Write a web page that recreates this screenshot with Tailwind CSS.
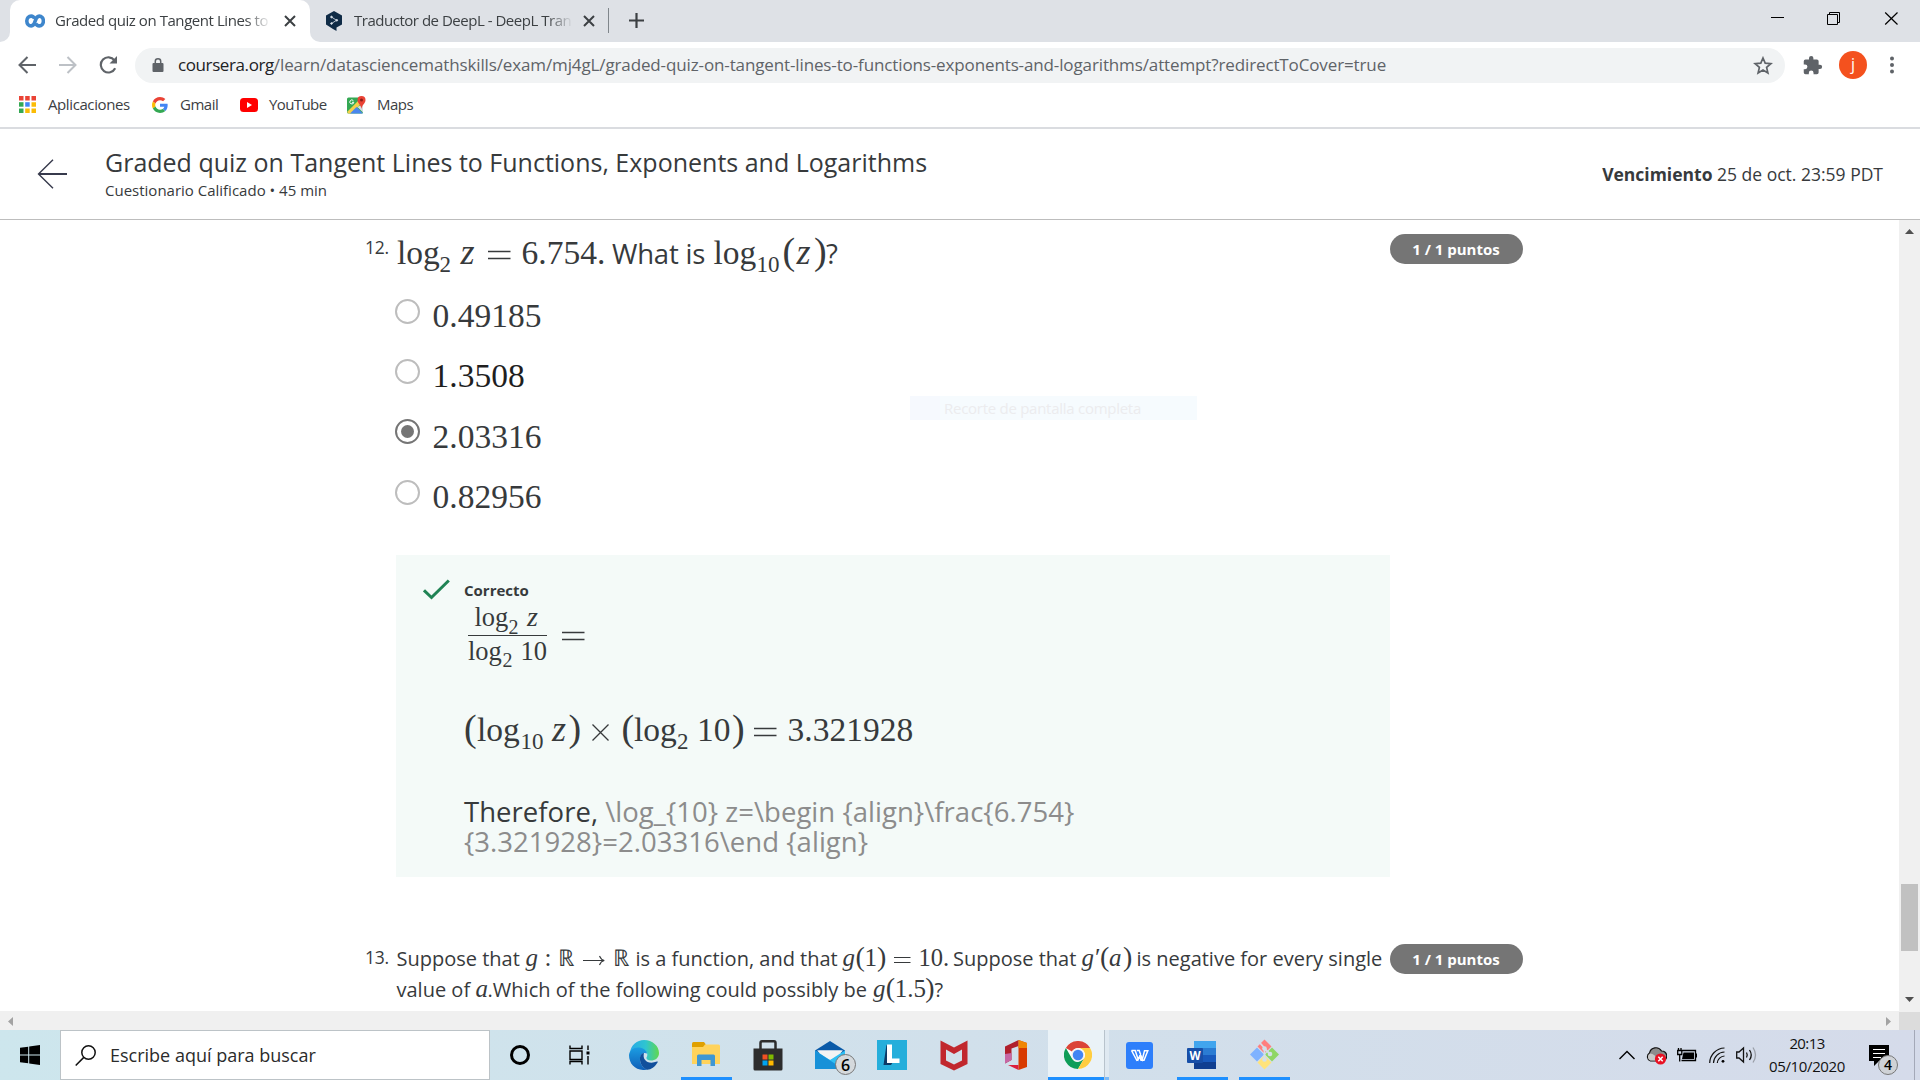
<!DOCTYPE html>
<html lang="es">
<head>
<meta charset="utf-8">
<title>Graded quiz on Tangent Lines to Functions, Exponents and Logarithms</title>
<script src="https://cdn.jsdelivr.net/npm/@tailwindcss/browser@4"></script>
</head>
<body class="flex h-[1080px] w-[1920px] flex-col overflow-hidden bg-white font-['Open_Sans',sans-serif] text-[#373a3c]">

<!-- Tab strip -->
<div class="flex h-[42px] shrink-0 bg-[#dee1e6] text-[15px] text-[#3c4043]">
  <div class="flex w-[10px] items-end bg-white"><div class="h-full w-full rounded-br-[10px] bg-[#dee1e6]"></div></div>
  <div class="bg-[#dee1e6]">
    <div class="flex h-full w-[300px] items-center rounded-t-[10px] bg-white pb-[1px] pl-[15px]">
      <svg class="h-[14px] w-[20px] shrink-0" viewBox="0 0 20 14" fill="none" stroke="#3e86cc" stroke-width="3.600"><path d="M9.600 4.600C8.800 2.900 7.800 2.100 6.200 2.100A4.400 4.900 0 0 0 6.200 11.900C8.800 11.900 9.500 9.500 10.200 7C11 4.200 12 2.100 14.200 2.100A4.200 4.900 0 0 1 14.200 11.900C12.500 11.900 11.400 11 10.700 9.500"/></svg>
      <span class="ml-[10px] w-[216px] overflow-hidden whitespace-nowrap tracking-[-0.44px] [mask-image:linear-gradient(to_right,black_88%,transparent)]">Graded quiz on Tangent Lines to</span>
      <svg class="ml-[13px] h-[12px] w-[12px]" viewBox="0 0 12 12" stroke="#3c4043" stroke-width="2"><path d="M1 1L11 11M11 1L1 11"/></svg>
    </div>
  </div>
  <div class="flex w-[10px] bg-white"><div class="h-full w-full rounded-bl-[10px] bg-[#dee1e6]"></div></div>
  <div class="flex items-center pb-[1px] pl-[5px]">
    <svg class="h-[20px] w-[18px] shrink-0" viewBox="0 0 18 20"><path fill="#0f2b46" d="M9 0L17 4.500V13.500L11.500 16.500V20L8 18L1 13.500V4.500Z"/><g fill="#dfe6ee" stroke="#dfe6ee"><path d="M6.500 6L11.500 9.300L6.500 12.500" fill="none" stroke-width=".8"/><circle cx="6.500" cy="6" r=".8"/><circle cx="11.800" cy="9.300" r=".8"/><circle cx="6.500" cy="12.500" r=".8"/></g></svg>
    <span class="ml-[11px] w-[219px] overflow-hidden whitespace-nowrap tracking-[-0.48px] [mask-image:linear-gradient(to_right,black_88%,transparent)]">Traductor de DeepL - DeepL Tran</span>
    <svg class="ml-[10px] h-[12px] w-[12px]" viewBox="0 0 12 12" stroke="#3c4043" stroke-width="2"><path d="M1 1L11 11M11 1L1 11"/></svg>
    <div class="ml-[13px] h-[25px] w-px bg-[#80868b]"></div>
    <svg class="ml-[20px] h-[15px] w-[15px]" viewBox="0 0 15 15" stroke="#3c4043" stroke-width="2.200"><path d="M7.500 0V15M0 7.500H15"/></svg>
  </div>
  <div class="ml-auto flex pt-[12px] pr-[22px]">
    <svg class="h-[13px] w-[128px]" viewBox="0 0 128 13" fill="none" stroke="#000"><path d="M1 5.500H14" stroke="#000"/><path d="M57.500 2.500H67.500V12.500H57.500ZM59.500 2.500V.500H69.500V10.500H67.500"/><path d="M115.200 .500L127.500 12.500M127.500 .500L115.200 12.500" stroke-width="1.200"/></svg>
  </div>
</div>

<!-- Address bar -->
<div class="flex h-[46px] shrink-0 items-center">
  <svg class="ml-[18px] h-[18px] w-[18px]" viewBox="0 0 18 18" fill="none" stroke="#5f6368" stroke-width="2"><path d="M18 9H2M9.500 1L1.500 9L9.500 17"/></svg>
  <svg class="ml-[23px] h-[18px] w-[18px]" viewBox="0 0 18 18" fill="none" stroke="#bdc1c6" stroke-width="2"><path d="M0 9H16M8.500 1L16.500 9L8.500 17"/></svg>
  <svg class="ml-[22px] h-[18px] w-[20px]" viewBox="0 0 20 18" fill="none" stroke="#5f6368" stroke-width="2.200"><path d="M16.200 12.300A7.600 7.600 0 1 1 15.500 4.300"/><path d="M18 0V7.500H10.500Z" fill="#5f6368" stroke="none"/></svg>
  <div class="ml-[16px] flex h-[35px] w-[1650px] items-center rounded-full bg-[#f1f3f4] pl-[17px] text-[17px]">
    <svg class="h-[14px] w-[12px]" viewBox="0 0 12 14"><path d="M1.500 5H10.500A1 1 0 0 1 11.500 6V13A1 1 0 0 1 10.500 14H1.500A1 1 0 0 1 .500 13V6A1 1 0 0 1 1.500 5Z" fill="#5f6368"/><path d="M3.300 6V3.300A2.700 2.500 0 0 1 8.700 3.300V6" fill="none" stroke="#5f6368" stroke-width="1.500"/></svg>
    <span class="ml-[14px] whitespace-nowrap tracking-[-0.4px] text-[#202124]">coursera.org</span><span class="whitespace-nowrap tracking-[-0.125px] text-[#5f6368]">/learn/datasciencemathskills/exam/mj4gL/graded-quiz-on-tangent-lines-to-functions-exponents-and-logarithms/attempt?redirectToCover=true</span>
    <svg class="mr-[12px] ml-auto h-[19px] w-[20px]" viewBox="0 0 20 19" fill="none" stroke="#5f6368" stroke-width="1.700"><path d="M10 2L12.200 7.200L17.900 7.700L13.600 11.400L14.900 17L10 14L5.100 17L6.400 11.400L2.100 7.700L7.800 7.200Z"/></svg>
  </div>
  <svg class="ml-[17px] h-[21px] w-[21px]" viewBox="0 0 24 24" fill="#5f6368"><path d="M20.500 11H19V7a2 2 0 0 0-2-2h-4V3.500a2.500 2.500 0 0 0-5 0V5H4a2 2 0 0 0-2 2v3.800h1.500a2.700 2.700 0 0 1 0 5.400H2V20a2 2 0 0 0 2 2h3.800v-1.500a2.700 2.700 0 0 1 5.400 0V22H17a2 2 0 0 0 2-2v-4h1.500a2.500 2.500 0 0 0 0-5z"/></svg>
  <div class="ml-[16px] flex h-[28px] w-[28px] items-center justify-center rounded-full bg-[#f4511e] pb-[2px] text-[16px] text-white">j</div>
  <svg class="ml-[22px] h-[18px] w-[6px]" viewBox="0 0 6 18" fill="#5f6368"><circle cx="3" cy="2.500" r="2"/><circle cx="3" cy="9" r="2"/><circle cx="3" cy="15.500" r="2"/></svg>
</div>

<!-- Bookmarks -->
<div class="flex h-[41px] shrink-0 items-center border-b-2 border-[#dadce0] pb-[6px] text-[15px] text-[#3c4043]">
  <svg class="ml-[19px] h-[17px] w-[17px]" viewBox="0 0 17 17"><path fill="#ea4335" d="M0 0h4.500v4.500H0zM6.200 0h4.500v4.500H6.200zM12.500 0H17v4.500h-4.500z"/><path fill="#34a853" d="M0 6.200h4.500v4.500H0z"/><path fill="#4285f4" d="M6.200 6.200h4.500v4.500H6.200z"/><path fill="#fbbc05" d="M12.500 6.200H17v4.500h-4.500zM6.200 12.500h4.500V17H6.200zM12.500 12.500H17V17h-4.500z"/><path fill="#34a853" d="M0 12.500h4.500V17H0z"/></svg>
  <span class="ml-[12px] w-[104px] tracking-[-0.4px]">Aplicaciones</span>
  <svg class="h-[16px] w-[16px]" viewBox="0 0 48 48"><path fill="#EA4335" d="M24 9.500c3.540 0 6.710 1.220 9.210 3.600l6.850-6.850C35.900 2.380 30.470 0 24 0 14.620 0 6.510 5.380 2.560 13.220l7.980 6.190C12.430 13.720 17.740 9.500 24 9.500z"/><path fill="#4285F4" d="M46.980 24.550c0-1.570-.15-3.090-.38-4.550H24v9.020h12.940c-.58 2.960-2.260 5.480-4.780 7.180l7.730 6c4.510-4.180 7.090-10.360 7.090-17.650z"/><path fill="#FBBC05" d="M10.530 28.590c-.48-1.450-.76-2.990-.76-4.590s.27-3.140.76-4.590l-7.980-6.190C.92 16.460 0 20.120 0 24c0 3.880.92 7.540 2.560 10.780l7.970-6.190z"/><path fill="#34A853" d="M24 48c6.480 0 11.930-2.130 15.890-5.810l-7.730-6c-2.150 1.450-4.920 2.300-8.160 2.300-6.260 0-11.570-4.220-13.470-9.910l-7.980 6.190C6.510 42.620 14.620 48 24 48z"/></svg>
  <span class="ml-[12px] w-[60px] tracking-[-0.5px]">Gmail</span>
  <svg class="h-[14px] w-[18px]" viewBox="0 0 18 14"><rect width="18" height="14" rx="3.500" fill="#f00"/><path d="M7 4L12 7L7 10Z" fill="#fff"/></svg>
  <span class="ml-[11px] w-[78px] tracking-[-0.6px]">YouTube</span>
  <svg class="h-[18px] w-[19px]" viewBox="0 0 19 18"><rect x="0" y="1.500" width="16" height="16" rx="1.500" fill="#34a853"/><path d="M0 16L13 3L16 6L4 17.500H1.500Z" fill="#f4d04a"/><path d="M3 17.500L9.500 11L16 17.500Z" fill="#4a86ee"/><path d="M16 8L10.500 11L16 16.500Z" fill="#d9dde2"/><path d="M14.500 0A4 4 0 0 1 18.500 4C18.500 7.500 15 8.500 14.500 13C14 8.500 10.500 7.500 10.500 4A4 4 0 0 1 14.500 0Z" fill="#ea4335"/><circle cx="14.500" cy="4" r="1.500" fill="#8c1d18"/><path d="M6.400 4.700A2 2 0 1 0 6.800 6.300H5" fill="none" stroke="#fff" stroke-width="1"/></svg>
  <span class="ml-[11px] tracking-[-0.5px]">Maps</span>
</div>

<!-- Quiz header -->
<div class="flex h-[91px] shrink-0 border-b border-[#bdbdbd]">
  <svg class="ml-[37px] mt-[30px] h-[30px] w-[31px]" viewBox="0 0 31 30" fill="none" stroke="#373a4c" stroke-width="1.400"><path d="M30 15H2" stroke-width="2"/><path d="M16 .700L1.500 15L16 29.300"/></svg>
  <div class="ml-[37px] flex flex-col pt-[16px]">
    <h1 class="text-[25px] leading-[34px] whitespace-nowrap">Graded quiz on Tangent Lines to Functions, Exponents and Logarithms</h1>
    <p class="text-[15px] leading-[22px]">Cuestionario Calificado • 45 min</p>
  </div>
  <p class="mr-[37px] ml-auto pt-[31px] text-[17.5px] leading-[28px]"><b>Vencimiento</b> 25 de oct. 23:59 PDT</p>
</div>

<!-- Quiz body with scroll bars -->
<div class="relative flex h-[810px] shrink-0 flex-col overflow-hidden">
  <div class="flex h-[791px]">
    <main class="w-[1899px] pl-[365px]">

      <section class="flex h-[657px] leading-none">
        <span class="mt-[19px] w-[31px] text-[17.5px] tracking-[-0.3px]">12.</span>
        <div class="w-[994px] pt-[12px]">
          <div class="flex h-[40px] items-baseline pl-[1px] font-['Liberation_Serif',serif] text-[33.5px]">
            <span class="w-[42.5px]">log</span>
            <span class="w-[21px] translate-y-[8px] text-[23px]">2</span>
            <i class="w-[27px] text-[36px]">z</i>
            <svg class="h-[14px] w-[34px]" stroke="#373a3c" stroke-width="1.300"><path d="M0 1.500H22.500M0 8.500H22.500"/></svg>
            <span class="w-[90.500px]">6.754.</span>
            <span class="w-[101.500px] font-['Open_Sans',sans-serif] text-[27.500px] tracking-[-0.2px]">What is</span>
            <span class="w-[43px]">log</span>
            <span class="w-[26px] translate-y-[8px] text-[23px]">10</span>
            <span class="w-[14px] text-[38px]">(</span>
            <i class="w-[17.500px] text-[36px]">z</i>
            <span class="w-[12px] text-[38px]">)</span>
            <span class="font-['Open_Sans',sans-serif] text-[27.500px]">?</span>
          </div>
          <ul class="mt-[14px] flex flex-col pl-[1px] font-['Liberation_Serif',serif] text-[33.500px] leading-[60px]">
            <li class="flex h-[60.400px]"><span class="mt-[12.500px] mr-[12.500px] ml-[-2px] h-[25px] w-[25px] rounded-full border-2 border-[#bdbdbd]"></span>0.49185</li>
            <li class="flex h-[60.400px]"><span class="mt-[12.500px] mr-[12.500px] ml-[-2px] h-[25px] w-[25px] rounded-full border-2 border-[#bdbdbd]"></span><span class="text-[#1f1f1f]">1.3508</span></li>
            <li class="flex h-[60.400px]"><span class="mt-[12.500px] mr-[12.500px] ml-[-2px] flex h-[25px] w-[25px] items-center justify-center rounded-full border-2 border-[#757575]"><span class="h-[13px] w-[13px] rounded-full bg-[#757575]"></span></span>2.03316</li>
            <li class="flex h-[60.400px]"><span class="mt-[12.500px] mr-[12.500px] ml-[-2px] h-[25px] w-[25px] rounded-full border-2 border-[#bdbdbd]"></span>0.82956</li>
          </ul>
          <div class="mt-[27.400px] flex h-[322px] bg-[#f4faf8] pt-[25px] pl-[27px]">
            <svg class="-mt-px h-[21px] w-[27px]" viewBox="0 0 27 21" fill="none" stroke="#1f8354" stroke-width="3"><path d="M1 11.300L8.500 18.500L25.800 1.500"/></svg>
            <div class="ml-[14px] w-[640px]">
              <p class="text-[15px] leading-[20px] font-bold">Correcto</p>
              <div class="mt-[3px] ml-[4px] flex h-[66px] font-['Liberation_Serif',serif] text-[26.500px]">
                <div class="w-[93.500px]">
                  <div class="flex h-[32px] w-[79px] items-baseline pl-[6.500px]">
                    <span class="w-[34px]">log</span><span class="w-[18.500px] translate-y-[7.500px] text-[20px]">2</span><i class="text-[28px]">z</i>
                  </div>
                  <div class="flex h-[34px] w-[79px] items-baseline border-t border-[#373a3c] pt-[2px]">
                    <span class="w-[34.500px]">log</span><span class="w-[18px] translate-y-[7px] text-[20px]">2</span><span>10</span>
                  </div>
                </div>
                <svg class="mt-[28px] h-[14px] w-[24px]" stroke="#373a3c" stroke-width="1.300"><path d="M0 1.500H22.500M0 8.500H22.500"/></svg>
              </div>
              <div class="mt-[40px] flex h-[40px] items-baseline font-['Liberation_Serif',serif] text-[33.500px]">
                <span class="w-[13px] text-[38px]">(</span>
                <span class="w-[43.500px]">log</span>
                <span class="w-[31.500px] translate-y-[8px] text-[23px]">10</span>
                <i class="w-[16.500px] text-[36px]">z</i>
                <span class="w-[23.500px] text-[38px]">)</span>
                <svg class="h-[17px] w-[29.500px]" stroke="#373a3c" stroke-width="1.300"><path d="M.500 .500L16.500 16.500M16.500 .500L.500 16.500"/></svg>
                <span class="w-[12.500px] text-[38px]">(</span>
                <span class="w-[43px]">log</span>
                <span class="w-[20px] translate-y-[8px] text-[23px]">2</span>
                <span class="w-[35px]">10</span>
                <span class="w-[21.500px] text-[38px]">)</span>
                <svg class="h-[14px] w-[34px]" stroke="#373a3c" stroke-width="1.300"><path d="M0 1.500H22.500M0 8.500H22.500"/></svg>
                <span>3.321928</span>
              </div>
              <p class="mt-[48px] text-[27.500px] leading-[30px] tracking-[0.030px] whitespace-nowrap">Therefore, <span class="text-[#8c8c8c]">\log_{10} z=\begin {align}\frac{6.754}<br>{3.321928}=2.03316\end {align}</span></p>
            </div>
          </div>
        </div>
        <div class="mt-[14px] h-[30px] w-[133px] rounded-full bg-[#757575] pr-px text-center text-[15px] leading-[30px] font-bold text-white">1 / 1 puntos</div>
      </section>

      <section class="mt-[66px] flex h-[68px] leading-none">
        <span class="mt-[5.500px] w-[31.500px] text-[17.500px] tracking-[-0.3px]">13.</span>
        <div class="w-[993.500px] text-[20px] whitespace-nowrap">
          <div class="flex h-[31px] items-baseline">
            <span class="w-[129px]">Suppose that</span>
            <i class="w-[19px] font-['Liberation_Serif',serif] text-[25px]">g</i>
            <span class="w-[13px] font-['Liberation_Serif',serif] text-[25px]">:</span>
            <span class="w-[25px] font-['DejaVu_Sans',sans-serif] text-[23px] font-light">ℝ</span>
            <svg class="h-[12px] w-[30px]" fill="none" stroke="#373a3c" stroke-width="1.100"><path d="M0 6.500H21M16.500 2C17.500 4.500 19 6 21.300 6.500C19 7 17.500 8.500 16.500 11"/></svg>
            <span class="w-[23px] font-['DejaVu_Sans',sans-serif] text-[23px] font-light">ℝ</span>
            <span class="w-[207px]">is a function, and that</span>
            <span class="flex w-[51.500px] items-baseline font-['Liberation_Serif',serif] text-[25px]"><i class="w-[13px]">g</i><span class="w-[9px] text-[28px]">(</span><span class="w-[12.500px]">1</span><span class="text-[28px]">)</span></span>
            <svg class="h-[10px] w-[24.500px]" stroke="#373a3c" stroke-width="1.200"><path d="M0 1.500H16.500M0 6.500H16.500"/></svg>
            <span class="w-[34.500px] font-['Liberation_Serif',serif] text-[24.500px]">10.</span>
            <span class="w-[128.500px]">Suppose that</span>
            <span class="flex w-[55px] items-baseline font-['Liberation_Serif',serif] text-[25px]"><i class="w-[12px]">g</i><i class="w-[6.500px]">′</i><span class="w-[9px] text-[28px]">(</span><i class="w-[14px]">a</i><span class="text-[28px]">)</span></span>
            <span>is negative for every single</span>
          </div>
          <div class="flex h-[31px] items-baseline">
            <span class="w-[79px]">value of</span>
            <i class="w-[12px] font-['Liberation_Serif',serif] text-[25px]">a</i>
            <span class="w-[385.500px] tracking-[0.03px]">.Which of the following could possibly be</span>
            <span class="flex w-[61.500px] items-baseline font-['Liberation_Serif',serif] text-[25px]"><i class="w-[13px]">g</i><span class="w-[9px] text-[28px]">(</span><span class="w-[30.500px]">1.5</span><span class="text-[28px]">)</span></span>
            <span>?</span>
          </div>
        </div>
        <div class="mt-px h-[30px] w-[133px] rounded-full bg-[#757575] pr-px text-center text-[15px] leading-[30px] font-bold text-white">1 / 1 puntos</div>
      </section>
    </main>
    <div class="flex w-[21px] flex-col items-center bg-[#f0f0f0]">
      <svg class="mt-[9px] h-[5px] w-[9px]" viewBox="0 0 9 5"><path d="M0 5L4.500 0L9 5Z" fill="#505050"/></svg>
      <div class="mt-[650px] h-[67px] w-[17px] bg-[#c1c1c1]"></div>
      <svg class="mt-[46px] h-[5px] w-[9px]" viewBox="0 0 9 5"><path d="M0 0L4.500 5L9 0Z" fill="#505050"/></svg>
    </div>
  </div>
  <div class="flex h-[19px] items-center bg-[#f0f0f0] pt-px">
    <svg class="ml-[8px] h-[9px] w-[5px]" viewBox="0 0 5 9"><path d="M5 0L0 4.500L5 9Z" fill="#a3a3a3"/></svg>
    <svg class="mr-[8px] ml-auto h-[9px] w-[5px]" viewBox="0 0 5 9"><path d="M0 0L5 4.500L0 9Z" fill="#a3a3a3"/></svg>
    <div class="h-full w-[21px] bg-[#dcdcdc]"></div>
  </div>
  <!-- Fading tooltip of the snipping tool -->
  <div class="absolute top-[176px] left-[910px] flex h-[24px] w-[287px] items-center bg-[#f6fbfe] text-[15px] text-[#ececee]"><div class="mr-[4px] h-full w-[30px] bg-[#f6f9fe]"></div><span class="tracking-[-0.27px]">Recorte de pantalla completa</span></div>
</div>

<!-- Windows taskbar -->
<div class="flex h-[50px] shrink-0 bg-linear-to-r from-[#cde6ed] via-[#d1e0eb] to-[#d5dbea]">
  <div class="flex w-[60px] items-center justify-center">
    <svg class="h-[20px] w-[20px]" viewBox="0 0 20 20"><path d="M0 2.800L8.200 1.700V9.500H0ZM9.200 1.500L20 0V9.500H9.200ZM0 10.500H8.200V18.300L0 17.200ZM9.200 10.500H20V20L9.200 18.500Z"/></svg>
  </div>
  <div class="flex w-[430px] items-center border border-[#bcc3c7] bg-white pl-[14px] text-[18px] text-[#2b2b2b]">
    <svg class="h-[21px] w-[22px]" viewBox="0 0 22 21" fill="none" stroke="#111" stroke-width="1.500"><circle cx="13.500" cy="7.500" r="6.700"/><path d="M8.800 12.400L.700 20.500"/></svg>
    <span class="ml-[13px]">Escribe aquí para buscar</span>
  </div>
  <div class="flex w-[60px] items-center justify-center"><div class="h-[20px] w-[20px] rounded-full border-[3px] border-black"></div></div>
  <div class="flex w-[63px] items-center pl-[19px]">
    <svg class="h-[20px] w-[22px]" viewBox="0 0 22 20" fill="none" stroke="#000" stroke-width="1.400"><path d="M1 .500V3.500H13V.500M1 6H13V14.500H1ZM1 19.500V16.500H13V19.500M19 .500V5M19 11V19.500"/><path d="M17.500 6.500H20.500V9.500H17.500Z" fill="#000" stroke="none"/></svg>
  </div>

  <div class="flex w-[62px] items-center justify-center">
    <svg class="h-[30px] w-[30px]" viewBox="0 0 30 30"><defs><linearGradient id="e1" x1="0" x2="1"><stop offset="0" stop-color="#27a9e8"/><stop offset=".55" stop-color="#2fc5d0"/><stop offset="1" stop-color="#62d84e"/></linearGradient><linearGradient id="e2" x1="0" y1="0" x2="0" y2="1"><stop offset="0" stop-color="#1b9de2"/><stop offset="1" stop-color="#0f5fb8"/></linearGradient></defs><path d="M.800 13C2 5 8 0 15 0C23.500 0 30 6 30 13C30 18 26 20.500 22 20.500C18.500 20.500 17 19 17.500 17.500C20 14 17 9.500 12 9C7 8.500 3 10 .800 13Z" fill="url(#e1)"/><path d="M0 15C.500 10 5 7 10 7.500C15 8 18 11 18 13.500C14 11.500 10.500 15 11 20C11.500 25 15 29 19 29.500C8 32 0 25 0 15Z" fill="url(#e2)"/><path d="M11 20C10.500 16 12.500 13 15 13C13 20 19 25 28 21.500C28.800 21.200 29 21.800 28.500 22.500C26 27 22 29.500 18.500 29.800C14 28.500 11.500 24.500 11 20Z" fill="#114f9c"/></svg>
  </div>
  <div class="flex w-[62px] flex-col items-center justify-end">
    <svg class="mb-[11px] h-[24px] w-[28px]" viewBox="0 0 28 24"><path d="M0 1.500Q0 0 1.500 0H12L13.500 2V5H0Z" fill="#e0a000"/><path d="M0 5H11L13 2.500H26.500Q28 2.500 28 4V22H0Z" fill="#ffd35c"/><path d="M5 24V14Q5 12.500 6.500 12.500H21.500Q23 12.500 23 14V24H18.500V18H9.500V24Z" fill="#3f97d3"/></svg>
    <div class="h-[3px] w-[51px] bg-[#1e90ff]"></div>
  </div>
  <div class="flex w-[62px] items-center justify-center">
    <svg class="h-[31px] w-[30px]" viewBox="0 0 30 31"><path d="M7.500 9V3Q7.500 1.300 9 1.300H21Q22.500 1.300 22.500 3V9" fill="none" stroke="#2d2d2d" stroke-width="2.500"/><path d="M.500 8.500H29.500V29Q29.500 30.500 28 30.500H2Q.500 30.500 .500 29Z" fill="#2d2d2d"/><path fill="#f25022" d="M9.500 14.500h5v5h-5z"/><path fill="#7fba00" d="M15.500 14.500h5v5h-5z"/><path fill="#00a4ef" d="M9.500 20.500h5v5h-5z"/><path fill="#ffb900" d="M15.500 20.500h5v5h-5z"/></svg>
  </div>
  <div class="relative flex w-[62px] items-center justify-center">
    <svg class="h-[28px] w-[30px]" viewBox="0 0 30 28"><path d="M0 9.500L15 0L30 9.500V12H0Z" fill="#0a5aa8"/><path d="M2 9.500H28L20 18H10Z" fill="#f3f3f3"/><path d="M0 9.500L15 19L30 9.500V28H0Z" fill="#2fc0f5"/><path d="M0 9.500L28 28H0Z" fill="#1791d8"/><path d="M3 9.500H27L15.500 18.500Z" fill="#f3f3f3"/></svg>
    <div class="absolute top-[24px] left-[36px] flex h-[21px] w-[21px] items-center justify-center rounded-full border border-[#777] bg-[#d5d9dc] text-[16px] leading-none font-semibold text-black">6</div>
  </div>
  <div class="flex w-[62px] items-center justify-center">
    <svg class="h-[30px] w-[30px]" viewBox="0 0 30 30"><path fill="#25aedb" d="M0 0H30V30H0Z"/><path d="M9.500 4.500L6.500 25H14L16 22Z" fill="#0c3a66"/><path d="M10 4.500H15V18.500H22.500V23H10Z" fill="#fff"/></svg>
  </div>
  <div class="flex w-[62px] items-center justify-center">
    <svg class="h-[31px] w-[28px]" viewBox="0 0 28 31"><path d="M.500 .500L14 7.500L27.500 .500V24L14 30.500L.500 24Z" fill="#c1272d"/><path d="M6 9.500L14 14L22 9.500V20.500L14 24.500L6 20.500Z" fill="#d2e1ea"/></svg>
  </div>
  <div class="flex w-[62px] items-center justify-center">
    <svg class="h-[30px] w-[24px]" viewBox="0 0 24 30"><path d="M14.500 0L23 3V27L14.500 30Z" fill="#d83b01"/><path d="M1 6.500L14.500 0V6L7.500 8.500V20L1 23.500Z" fill="#b0202c"/><path d="M1 14L7.500 13V20L1 23.500Z" fill="#c667a4"/><path d="M4 25H14.500V30Z" fill="#dc1f3c"/><path d="M14.500 0L23 3V8H14.500Z" fill="#f08705"/></svg>
  </div>
  <div class="flex w-[62px]">
    <div class="ml-[1px] flex w-[56px] flex-col items-center justify-end bg-[#eaf2f7]">
      <svg class="mb-[8px] ml-[3px] h-[28px] w-[28px]" viewBox="0 0 48 48"><circle cx="24" cy="24" r="24" fill="#fff"/><path d="M3.200 12A24 24 0 0 1 44.800 12H24A12 12 0 0 0 13.600 18Z" fill="#db4437"/><path d="M3.200 12L13.600 30A12 12 0 0 0 24 36L34.400 30L24 48A24 24 0 0 1 3.200 12Z" fill="#0f9d58"/><path d="M44.800 12A24 24 0 0 1 24 48L34.400 30A12 12 0 0 0 24 12Z" fill="#ffcd40"/><circle cx="24" cy="24" r="11.500" fill="#f1f1f1"/><circle cx="24" cy="24" r="9" fill="#4285f4"/></svg>
      <div class="h-[3px] w-full bg-[#1e90ff]"></div>
    </div>
    <div class="flex w-[5px] items-end border-l border-[#b8c3cc] bg-[#dfe9f1]"><div class="h-[3px] w-full bg-[#7abaf8]"></div></div>
  </div>
  <div class="flex w-[62px] items-center justify-center pr-px">
    <svg class="h-[27px] w-[27px]" viewBox="0 0 27 27" fill="none"><rect width="27" height="27" rx="3" fill="#2e7ffb"/><path d="M5.500 8.500H9.200L12.200 17.500L14.800 11.500M10.800 8.500H13.200L16.300 17.500L18.500 8.800H21.800L18 18.300H15L13.500 14M5.500 8.500L10.800 18.300L12.500 17.500" stroke="#fff" stroke-width="1.500"/></svg>
  </div>
  <div class="flex w-[62px] flex-col items-center justify-end">
    <svg class="mb-[8px] h-[28px] w-[30px]" viewBox="0 0 30 28"><path fill="#41a5ee" d="M7 0H29V7H7Z"/><path fill="#2b7cd3" d="M7 7H29V14H7Z"/><path fill="#185abd" d="M7 14H29V21H7Z"/><path fill="#103f91" d="M7 21H29V28H7Z"/><rect y="7" width="16" height="15" rx="1" fill="#174fa8"/><text x="8" y="19" font-size="11.500" font-weight="700" fill="#fff" text-anchor="middle">W</text></svg>
    <div class="h-[3px] w-[51px] bg-[#1e90ff]"></div>
  </div>
  <div class="flex w-[62px] flex-col items-center justify-end">
    <svg class="mb-[7px] h-[31px] w-[31px]" viewBox="0 0 31 31"><path d="M15.500 .500L22.500 7.500L15.500 14.500L8.500 7.500Z" fill="#ff7f7f"/><path d="M8 8.500L15 15.500L8 22.500L1 15.500Z" fill="#7fb2ff"/><path d="M23 8.500L30 15.500L23 22.500L16 15.500Z" fill="#8fd665"/><path d="M15.500 16.500L22.500 23.500L15.500 30.500L8.500 23.500Z" fill="#ffe37a"/><path d="M11 4L15.500 9V22M15.500 9.500L21 15" fill="none" stroke="#d2e0ea" stroke-width="1.800"/><g fill="#d2e0ea"><circle cx="15.500" cy="9.500" r="2.300"/><circle cx="15.500" cy="20.500" r="2.300"/><circle cx="21" cy="15" r="2.300"/></g></svg>
    <div class="h-[3px] w-[51px] bg-[#1e90ff]"></div>
  </div>

  <!-- Tray -->
  <div class="ml-auto flex items-center">
    <svg class="h-[10px] w-[16px]" viewBox="0 0 16 10" fill="none" stroke="#000" stroke-width="1.400"><path d="M.500 9L8 1.500L15.500 9"/></svg>
    <svg class="ml-[11px] h-[19px] w-[21px]" viewBox="0 0 21 19"><path d="M4.500 15A4.500 4.500 0 0 1 3.500 7A6.500 6.500 0 0 1 15.500 5A5 5 0 0 1 16 15Z" fill="#8c8c8c" stroke="#111" stroke-width="1.200"/><path d="M4 14.500A4 4 0 0 1 4 7.500Q9 7.500 12 14.500Z" fill="#c8c8c8"/><circle cx="14.500" cy="13" r="5.600" fill="#e81123"/><path d="M12.300 10.800L16.700 15.200M16.700 10.800L12.300 15.200" stroke="#fff" stroke-width="1.500"/></svg>
    <svg class="ml-[10px] h-[14px] w-[20px]" viewBox="0 0 20 14" fill="none" stroke="#000" stroke-width="1.300"><path d="M4 2.500H18.500V12.500H4.500M1.500 0V2M4 0V2M.700 2.500H4.800V6.500H.700ZM2.700 6.500V13.500M19.500 5.500V9.500"/><path d="M6.500 4.500H17V11H5Z" fill="#000" stroke="none"/></svg>
    <svg class="ml-[12px] h-[16px] w-[16px]" viewBox="0 0 16 16" fill="none" stroke="#111" stroke-width="1.200"><path d="M.700 16A15.300 15.300 0 0 1 15.500 1M4.500 16A11.300 11.300 0 0 1 15.500 5M8.300 16A7.500 7.500 0 0 1 15.500 9"/><circle cx="14" cy="14.300" r="1.400" fill="#000" stroke="none"/></svg>
    <svg class="ml-[11px] h-[18px] w-[21px]" viewBox="0 0 21 18" fill="none" stroke="#111" stroke-width="1.300"><path d="M.700 6H3L7.500 2V16L3 12H.700Z"/><path d="M10.500 6.500Q12 9 10.500 11.500M13.500 4Q17 9 13.500 14"/><path d="M17 1.500Q22 9 17 16.500" stroke="#9a9fa8"/></svg>
    <div class="ml-[12px] flex h-full w-[76px] flex-col items-center pt-[2px] text-[15px] leading-[23px] text-[#111]"><span class="tracking-[-0.6px]">20:13</span><span class="tracking-[-0.36px]">05/10/2020</span></div>
    <div class="relative ml-[24px] h-[50px] w-[45px]">
      <svg class="mt-[15px] h-[21px] w-[20px]" viewBox="0 0 20 21"><path d="M0 0H20V16H10L5 21V16H0Z"/><path d="M4 4.500H16M4 8.500H16M4 12.500H12" stroke="#fff" stroke-width="1.200"/></svg>
      <div class="absolute top-[25px] left-[9px] flex h-[20px] w-[20px] items-center justify-center rounded-full border border-[#777] bg-[#cfd2d6] text-[14px] leading-none font-semibold text-black">4</div>
    </div>
    <div class="h-full w-[6px] border-l border-[#a4a9b8]"></div>
  </div>
</div>
</body>
</html>
